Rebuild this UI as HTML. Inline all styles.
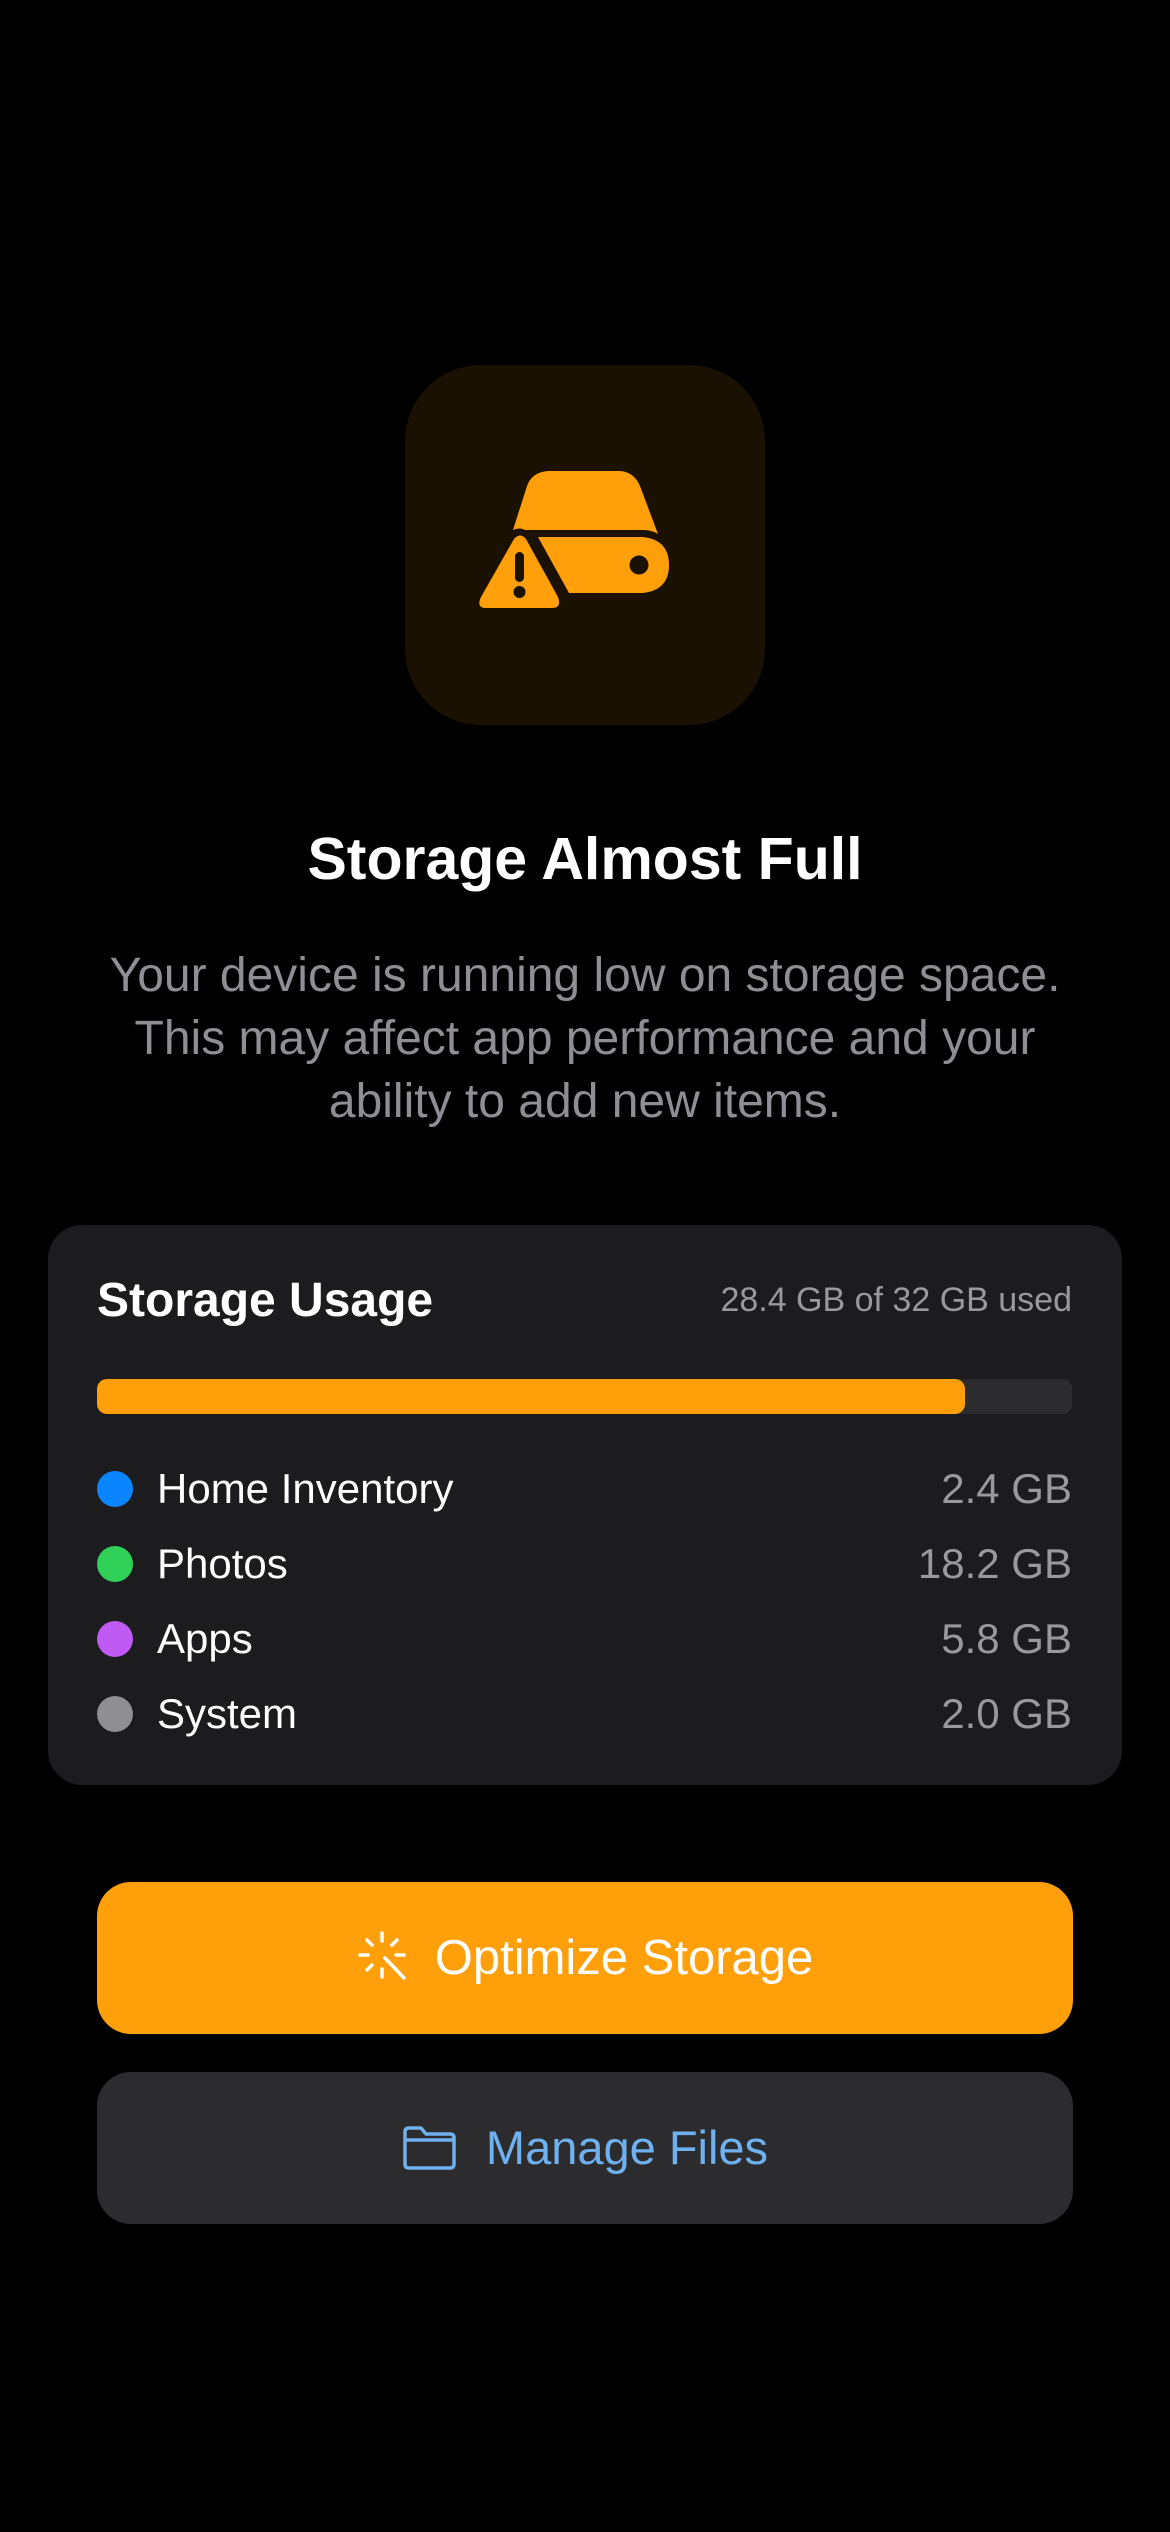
<!DOCTYPE html>
<html><head><meta charset="utf-8"><style>
*{margin:0;padding:0;box-sizing:border-box}
body{width:1170px;height:2532px;background:#000;font-family:"Liberation Sans",sans-serif;position:relative;overflow:hidden;color:#fff}
.abs{position:absolute}
.sub{left:0;width:1170px;text-align:center;color:#8e8e93;font-size:48px;line-height:63px;top:944px}
.card{left:48px;top:1225px;width:1074px;height:560px;background:#1c1c1e;border-radius:34px}
.row{position:absolute;left:97px;width:975px;height:60px;font-size:42px;line-height:60px}
.row .d{position:absolute;left:0;top:12px;width:36px;height:36px;border-radius:50%}
.row .n{position:absolute;left:60px;top:0}
.row .v{position:absolute;right:0;top:0;color:#98989d}
.btn{left:97px;width:976px;height:152px;border-radius:34px;font-size:46px;text-align:center}
</style></head><body>
<div class="abs" style="left:405px;top:365px;width:360px;height:360px;border-radius:76px;background:#1a1103"></div>
<svg class="abs" style="left:405px;top:365px" width="360" height="360" viewBox="405 365 360 360">
<path d="M527 486 Q532 472 548 471 L620 471 Q634 472 640 486 L658 534 Q652 530 643 530 L525 530 Q520 527 513 530 Z" fill="#ff9f0a"/>
<path d="M538 537 L643 537 Q669 540 669 565 Q669 590 643 593 L569 593 Z" fill="#ff9f0a"/>
<circle cx="639" cy="565" r="9.5" fill="#1a1103"/>
<path d="M514 539 Q520 532 526 539 L558 597 Q562 608 552 608 L486 608 Q476 608 481 597 Z" fill="#ff9f0a"/>
<rect x="515" y="552" width="9" height="30" rx="4.5" fill="#1a1103"/>
<circle cx="519.5" cy="592" r="6" fill="#1a1103"/>
</svg>
<div class="abs" style="left:0;width:1170px;top:822px;text-align:center;font-size:59px;font-weight:bold;line-height:74px">Storage Almost Full</div>
<div class="abs sub">Your device is running low on storage space.<br>This may affect app performance and your<br>ability to add new items.</div>
<div class="abs card"></div>
<div class="abs" style="left:97px;top:1271px;font-size:48px;font-weight:bold;line-height:60px">Storage Usage</div>
<div class="abs" style="right:98px;top:1280px;font-size:34px;color:#98989d;line-height:40px">28.4 GB of 32 GB used</div>
<div class="abs" style="left:97px;top:1379px;width:975px;height:35px;border-radius:10px;background:#2c2c2e"></div>
<div class="abs" style="left:97px;top:1379px;width:868px;height:35px;border-radius:10px;background:#ff9f0a"></div>
<div class="row" style="top:1459px"><div class="d" style="background:#0a84ff"></div><div class="n">Home Inventory</div><div class="v">2.4 GB</div></div>
<div class="row" style="top:1534px"><div class="d" style="background:#30d158"></div><div class="n">Photos</div><div class="v">18.2 GB</div></div>
<div class="row" style="top:1609px"><div class="d" style="background:#bf5af2"></div><div class="n">Apps</div><div class="v">5.8 GB</div></div>
<div class="row" style="top:1684px"><div class="d" style="background:#8e8e93"></div><div class="n">System</div><div class="v">2.0 GB</div></div>
<div class="abs btn" style="top:1882px;background:#ff9f0a;color:#fff;line-height:152px;font-size:49px"><svg width="54" height="54" viewBox="0 0 54 54" style="vertical-align:-10px;margin-right:24px" stroke="#fff" stroke-width="3.5" stroke-linecap="round" fill="none"><path d="M25 3v8M25 39v8M3 25h8M39 25h8M10 10l5 5M40 10l-5 5M10 40l5-5M28 28l19 20"/></svg>Optimize Storage</div>
<div class="abs btn" style="top:2072px;background:#2c2c2e;color:#6fb0ef;line-height:152px;font-size:47px"><svg width="54" height="44" viewBox="0 0 54 44" style="vertical-align:-6px;margin-right:30px" stroke="#6fb0ef" stroke-width="3.5" fill="none" stroke-linejoin="round"><path d="M3 6Q3 2 7 2H19L24 8H48Q52 8 52 12V38Q52 42 48 42H7Q3 42 3 38Z M3 14H52"/></svg>Manage Files</div>
</body></html>
